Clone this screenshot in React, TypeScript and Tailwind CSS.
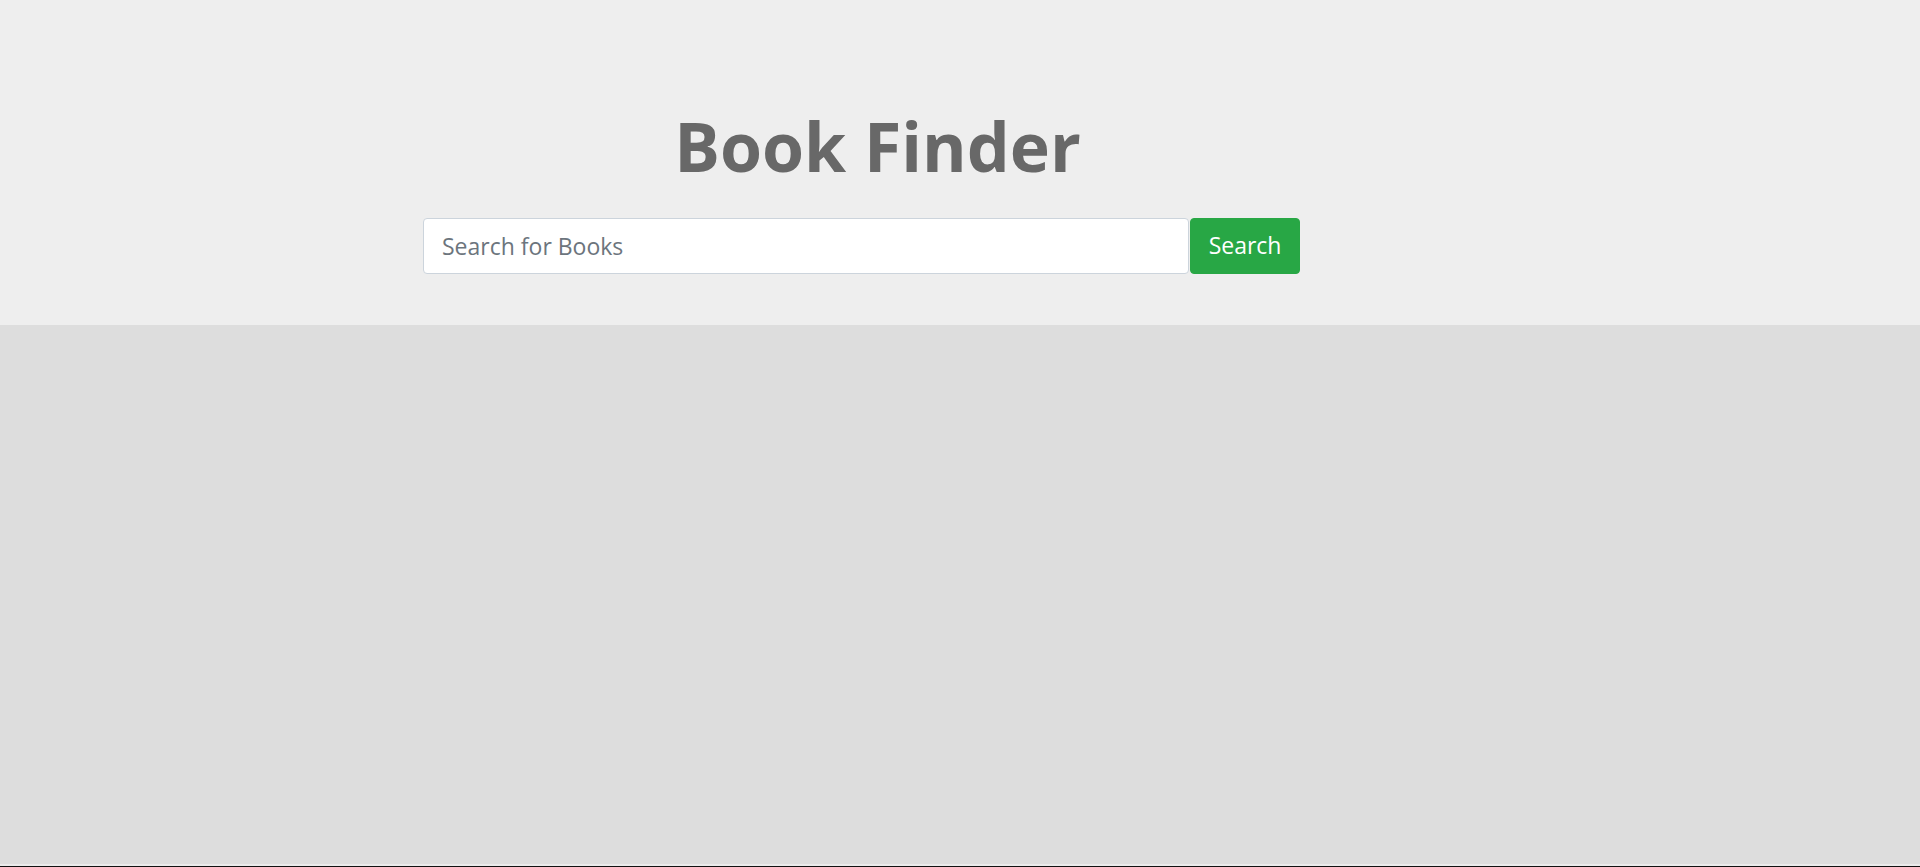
import { useState } from "react";

export default function App() {
  const [query, setQuery] = useState("");

  return (
    <div className="flex h-[867px] flex-col bg-[#dddddd] [font-family:'Open_Sans',sans-serif]">
      <header className="h-[325px] shrink-0 bg-[#eeeeee] pt-[105px]">
        <div className="ml-[423px] w-[909px]">
          <h1 className="text-center text-[68px] font-bold leading-[1.2] text-[#686868]">
            Book Finder
          </h1>
          <form
            className="mt-[31px] flex w-[877px] gap-px"
            onSubmit={(e) => e.preventDefault()}
          >
            <input
              type="text"
              value={query}
              onChange={(e) => setQuery(e.target.value)}
              placeholder="Search for Books"
              className="h-[56px] w-[767px] rounded-[4px] border border-[#ccd4dc] bg-white pl-[18px] text-[23px] text-[#495057] outline-none placeholder:text-[#6c757d]"
            />
            <button
              type="submit"
              className="h-[56px] w-[110px] rounded-[4px] border border-[#28a745] bg-[#28a745] text-[23px] text-white hover:bg-[#218838]"
            >
              Search
            </button>
          </form>
        </div>
      </header>

      <main className="flex-1" />

      <div className="h-[2px] bg-[#ebebeb]" />
      <div className="h-px bg-[#111111]" />
    </div>
  );
}
